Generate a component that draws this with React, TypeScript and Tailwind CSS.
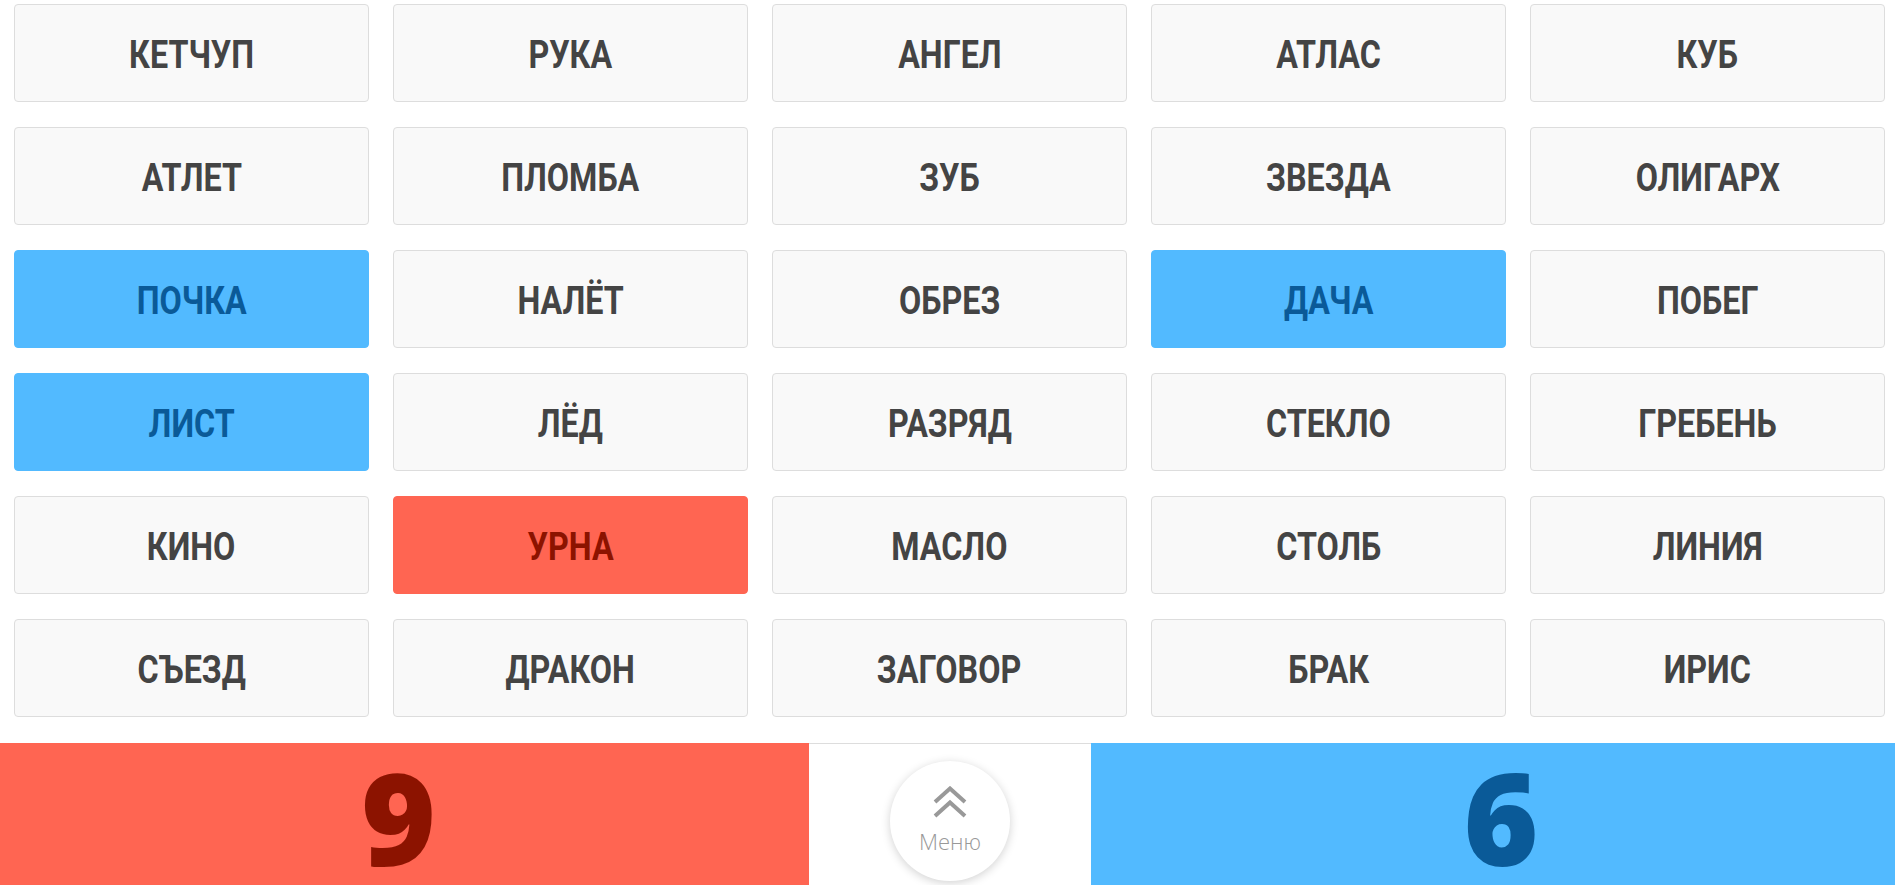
import React from 'react'

type Tone = 'neutral' | 'blue' | 'red'

const words: { text: string; tone: Tone }[] = [
  { text: 'КЕТЧУП', tone: 'neutral' },
  { text: 'РУКА', tone: 'neutral' },
  { text: 'АНГЕЛ', tone: 'neutral' },
  { text: 'АТЛАС', tone: 'neutral' },
  { text: 'КУБ', tone: 'neutral' },
  { text: 'АТЛЕТ', tone: 'neutral' },
  { text: 'ПЛОМБА', tone: 'neutral' },
  { text: 'ЗУБ', tone: 'neutral' },
  { text: 'ЗВЕЗДА', tone: 'neutral' },
  { text: 'ОЛИГАРХ', tone: 'neutral' },
  { text: 'ПОЧКА', tone: 'blue' },
  { text: 'НАЛЁТ', tone: 'neutral' },
  { text: 'ОБРЕЗ', tone: 'neutral' },
  { text: 'ДАЧА', tone: 'blue' },
  { text: 'ПОБЕГ', tone: 'neutral' },
  { text: 'ЛИСТ', tone: 'blue' },
  { text: 'ЛЁД', tone: 'neutral' },
  { text: 'РАЗРЯД', tone: 'neutral' },
  { text: 'СТЕКЛО', tone: 'neutral' },
  { text: 'ГРЕБЕНЬ', tone: 'neutral' },
  { text: 'КИНО', tone: 'neutral' },
  { text: 'УРНА', tone: 'red' },
  { text: 'МАСЛО', tone: 'neutral' },
  { text: 'СТОЛБ', tone: 'neutral' },
  { text: 'ЛИНИЯ', tone: 'neutral' },
  { text: 'СЪЕЗД', tone: 'neutral' },
  { text: 'ДРАКОН', tone: 'neutral' },
  { text: 'ЗАГОВОР', tone: 'neutral' },
  { text: 'БРАК', tone: 'neutral' },
  { text: 'ИРИС', tone: 'neutral' },
]

const toneClass: Record<Tone, string> = {
  neutral: 'bg-[#f9f9f9] border-[#dddddd] text-[#444444]',
  blue: 'bg-[#52baff] border-[#52baff] text-[#0a5a98]',
  red: 'bg-[#ff6552] border-[#ff6552] text-[#8c1300]',
}

function WordCard({ text, tone }: { text: string; tone: Tone }) {
  return (
    <div
      className={`h-[98px] rounded-[4px] border flex items-center justify-center pt-[4px] select-none ${toneClass[tone]}`}
    >
      <span className="font-['Roboto',sans-serif] font-bold text-[38px] leading-none scale-x-[0.85] inline-block">
        {text}
      </span>
    </div>
  )
}

export default function App() {
  return (
    <div className="w-[1895px] h-[885px] overflow-hidden bg-white flex flex-col">
      {/* Board */}
      <div className="grid grid-cols-[repeat(5,355px)] gap-x-[24px] gap-y-[25px] pl-[14px] pt-[4px]">
        {words.map((w) => (
          <WordCard key={w.text} text={w.text} tone={w.tone} />
        ))}
      </div>

      {/* Score bar */}
      <div className="mt-[26px] flex h-[142px]">
        <div className="w-[809px] bg-[#ff6552] flex justify-center items-start pt-[18px]">
          <span className="font-['Open_Sans',sans-serif] font-extrabold text-[128px] leading-[112px] text-[#8c1300] ml-[-12px]">
            9
          </span>
        </div>
        <div className="flex-1 border-t border-[#dddddd] flex justify-center pt-[17px]">
          <button className="w-[120px] h-[120px] rounded-full bg-white shadow-[0_2px_10px_rgba(0,0,0,0.18)] flex flex-col items-center pt-[25px]">
            <svg width="36" height="32" viewBox="0 0 36 32" fill="none" stroke="#999999" strokeWidth="4">
              <polyline points="3,16 18,2.5 33,16" />
              <polyline points="3,30 18,16.5 33,30" />
            </svg>
            <span className="mt-[12px] font-['Open_Sans',sans-serif] font-light text-[22px] leading-none text-[#999999]">
              Меню
            </span>
          </button>
        </div>
        <div className="w-[804px] bg-[#52baff] flex justify-center items-start pt-[18px]">
          <span className="font-['Open_Sans',sans-serif] font-extrabold text-[128px] leading-[112px] text-[#0a5a98] ml-[16px]">
            6
          </span>
        </div>
      </div>
    </div>
  )
}
